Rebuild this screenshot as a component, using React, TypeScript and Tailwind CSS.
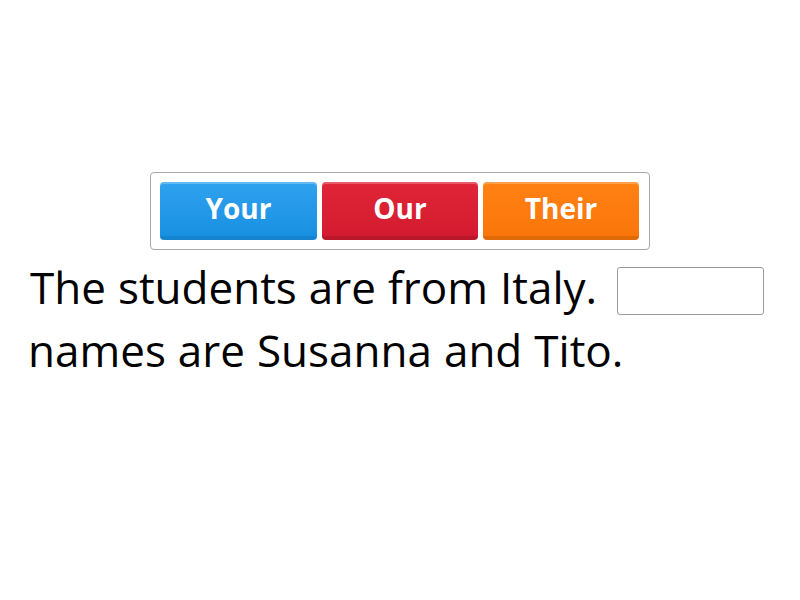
import React from "react";

const words1 = ["The", "students", "are", "from", "Italy."];
const words2 = ["names", "are", "Susanna", "and", "Tito."];

export default function App() {
  return (
    <div className="w-[800px] h-[600px] bg-white" style={{ fontFamily: '"Open Sans", sans-serif' }}>
      <div className="pt-[172px] flex justify-center">
        <div className="w-[500px] h-[78px] border border-[#a8a8a8] rounded-[4px] flex items-center gap-[5px] px-[9px]">
          <button className="w-[157px] h-[58px] rounded-[4px] bg-gradient-to-b from-[#2fa2ee] to-[#1890e2] border-b-[4px] border-[#1583d0] shadow-[inset_0_2px_0_rgba(255,255,255,0.25)] text-white font-bold text-[28px] leading-none pb-[2px]">Your</button>
          <button className="w-[156px] h-[58px] rounded-[4px] bg-gradient-to-b from-[#e02538] to-[#d41a2e] border-b-[4px] border-[#b8182a] shadow-[inset_0_2px_0_rgba(255,255,255,0.25)] text-white font-bold text-[28px] leading-none pb-[2px]">Our</button>
          <button className="w-[156px] h-[58px] rounded-[4px] bg-gradient-to-b from-[#ff8114] to-[#fb760a] border-b-[4px] border-[#e06a08] shadow-[inset_0_2px_0_rgba(255,255,255,0.25)] text-white font-bold text-[28px] leading-none pb-[2px]">Their</button>
        </div>
      </div>
      <div className="pl-[30px] pt-[6px] text-[44px] text-black leading-[63px]">
        <div className="flex items-center gap-x-[12px]">
          {words1.map((w, i) => (
            <span key={i}>{w}</span>
          ))}
          <span className="ml-[8px] mt-[6px] w-[147px] h-[48px] border border-[#9a9a9a] rounded-[3px] inline-block" />
        </div>
        <div className="flex items-center gap-x-[12px] -ml-[2px]">
          {words2.map((w, i) => (
            <span key={i}>{w}</span>
          ))}
        </div>
      </div>
    </div>
  );
}
